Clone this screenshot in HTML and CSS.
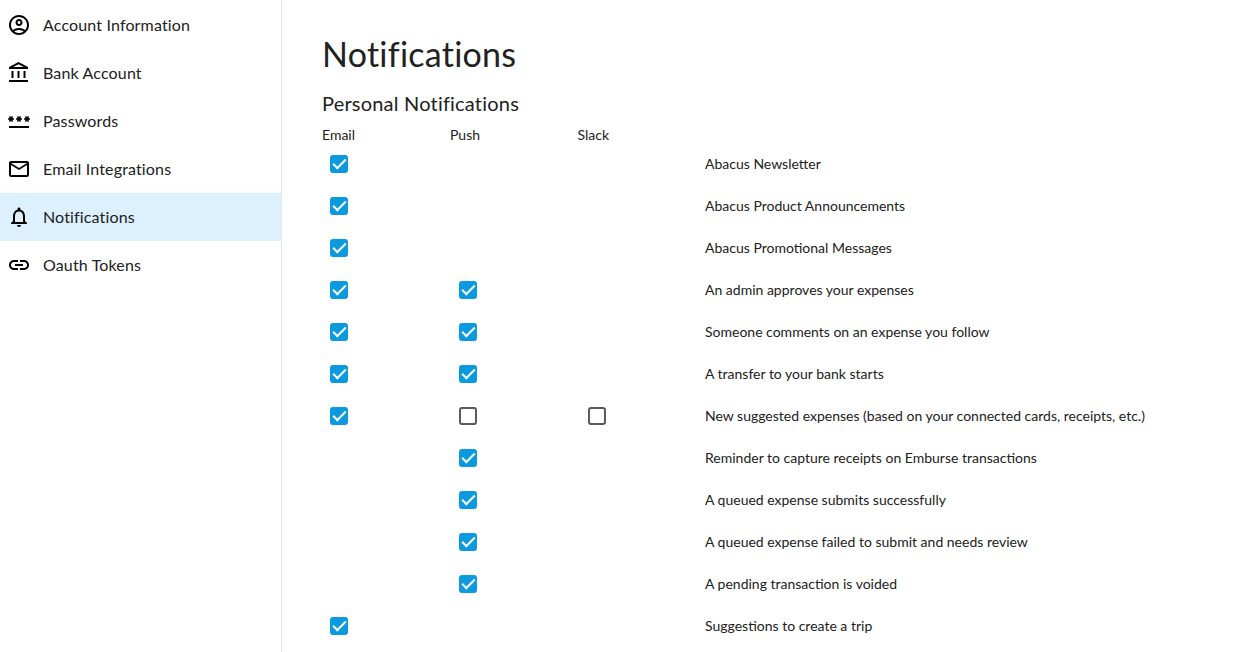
FILE: index.html
```html
<!DOCTYPE html>
<html lang="en">
<head>
    <meta charset="UTF-8">
    <meta name="viewport" content="width=device-width, initial-scale=1.0">
    <title>Notifications</title>
    <link rel="stylesheet" href="styles.css">
</head>
<body>

    <nav class="sidebar">
        <a class="nav-item">
            <svg class="nav-icon" viewBox="0 0 24 24"><path d="M12 2C6.480 2 2 6.480 2 12s4.480 10 10 10 10-4.480 10-10S17.520 2 12 2zM7.350 18.500C8.660 17.560 10.260 17 12 17s3.340.56 4.650 1.500C15.340 19.440 13.740 20 12 20s-3.340-.56-4.650-1.500zm10.790-1.380C16.450 15.800 14.320 15 12 15s-4.450.8-6.140 2.120C4.700 15.730 4 13.950 4 12c0-4.420 3.580-8 8-8s8 3.580 8 8c0 1.950-.7 3.730-1.860 5.120zM12 6c-1.930 0-3.500 1.570-3.500 3.500S10.070 13 12 13s3.500-1.570 3.500-3.500S13.930 6 12 6zm0 5c-.83 0-1.500-.67-1.500-1.500S11.170 8 12 8s1.500.67 1.500 1.500S12.830 11 12 11z"/></svg>
            <span class="nav-label">Account Information</span>
        </a>
        <a class="nav-item">
            <svg class="nav-icon" viewBox="0 0 24 24"><path d="M6.500 10h-2v7h2v-7zm6 0h-2v7h2v-7zm8.500 9H2v2h19v-2zm-2.500-9h-2v7h2v-7zm-7-6.740L16.710 6H6.290l5.210-2.740m0-2.260L2 6v2h19V6l-9.500-5z"/></svg>
            <span class="nav-label">Bank Account</span>
        </a>
        <a class="nav-item">
            <svg class="nav-icon" viewBox="0 0 24 24"><path d="M2 17h20v2H2v-2zm1.150-4.050L4 11.470l.85 1.480 1.300-.75-.85-1.480H7v-1.500H5.300l.85-1.470L4.850 7 4 8.470 3.150 7l-1.300.75.85 1.470H1v1.500h1.700l-.85 1.480 1.300.75zm6.700-.75l1.300.75.85-1.480.85 1.480 1.300-.75-.85-1.480H15v-1.500h-1.700l.85-1.470-1.300-.75L12 8.470 11.150 7l-1.300.75.85 1.470H9v1.500h1.700l-.85 1.480zM23 9.220h-1.700l.85-1.470-1.300-.75L20 8.470 19.150 7l-1.300.75.85 1.470H17v1.500h1.700l-.85 1.480 1.300.75.85-1.480.85 1.480 1.300-.75-.85-1.480H23v-1.500z"/></svg>
            <span class="nav-label">Passwords</span>
        </a>
        <a class="nav-item">
            <svg class="nav-icon" viewBox="0 0 24 24"><path d="M22 6c0-1.100-.9-2-2-2H4c-1.100 0-2 .9-2 2v12c0 1.100.9 2 2 2h16c1.100 0 2-.9 2-2V6zm-2 0l-8 5-8-5h16zm0 12H4V8l8 5 8-5v10z"/></svg>
            <span class="nav-label">Email Integrations</span>
        </a>
        <a class="nav-item active">
            <svg class="nav-icon" viewBox="0 0 24 24"><path d="M12 22c1.100 0 2-.9 2-2h-4c0 1.100.9 2 2 2zm6-6v-5c0-3.070-1.630-5.640-4.500-6.320V4c0-.83-.67-1.500-1.500-1.500s-1.500.67-1.500 1.500v.68C7.640 5.360 6 7.920 6 11v5l-2 2v1h16v-1l-2-2zm-2 1H8v-6c0-2.480 1.510-4.500 4-4.500s4 2.020 4 4.500v6z"/></svg>
            <span class="nav-label">Notifications</span>
        </a>
        <a class="nav-item">
            <svg class="nav-icon" viewBox="0 0 24 24"><path d="M3.900 12c0-1.710 1.390-3.100 3.100-3.100h4V7H7c-2.760 0-5 2.240-5 5s2.240 5 5 5h4v-1.900H7c-1.710 0-3.100-1.390-3.100-3.100zM8 13h8v-2H8v2zm9-6h-4v1.900h4c1.710 0 3.100 1.390 3.100 3.100s-1.390 3.100-3.100 3.100h-4V17h4c2.760 0 5-2.240 5-5s-2.240-5-5-5z"/></svg>
            <span class="nav-label">Oauth Tokens</span>
        </a>
    </nav>

    <main class="content">
        <h1>Notifications</h1>
        <h2>Personal Notifications</h2>

        <div class="grid head">
            <span>Email</span>
            <span>Push</span>
            <span>Slack</span>
            <span></span>
        </div>

        <div class="grid row">
            <span class="cell"><span class="box on"></span></span>
            <span class="cell"></span>
            <span class="cell"></span>
            <span class="desc">Abacus Newsletter</span>
        </div>
        <div class="grid row">
            <span class="cell"><span class="box on"></span></span>
            <span class="cell"></span>
            <span class="cell"></span>
            <span class="desc">Abacus Product Announcements</span>
        </div>
        <div class="grid row">
            <span class="cell"><span class="box on"></span></span>
            <span class="cell"></span>
            <span class="cell"></span>
            <span class="desc">Abacus Promotional Messages</span>
        </div>
        <div class="grid row">
            <span class="cell"><span class="box on"></span></span>
            <span class="cell"><span class="box on"></span></span>
            <span class="cell"></span>
            <span class="desc">An admin approves your expenses</span>
        </div>
        <div class="grid row">
            <span class="cell"><span class="box on"></span></span>
            <span class="cell"><span class="box on"></span></span>
            <span class="cell"></span>
            <span class="desc">Someone comments on an expense you follow</span>
        </div>
        <div class="grid row">
            <span class="cell"><span class="box on"></span></span>
            <span class="cell"><span class="box on"></span></span>
            <span class="cell"></span>
            <span class="desc">A transfer to your bank starts</span>
        </div>
        <div class="grid row">
            <span class="cell"><span class="box on"></span></span>
            <span class="cell"><span class="box"></span></span>
            <span class="cell"><span class="box"></span></span>
            <span class="desc">New suggested expenses (based on your connected cards, receipts, etc.)</span>
        </div>
        <div class="grid row">
            <span class="cell"></span>
            <span class="cell"><span class="box on"></span></span>
            <span class="cell"></span>
            <span class="desc">Reminder to capture receipts on Emburse transactions</span>
        </div>
        <div class="grid row">
            <span class="cell"></span>
            <span class="cell"><span class="box on"></span></span>
            <span class="cell"></span>
            <span class="desc">A queued expense submits successfully</span>
        </div>
        <div class="grid row">
            <span class="cell"></span>
            <span class="cell"><span class="box on"></span></span>
            <span class="cell"></span>
            <span class="desc">A queued expense failed to submit and needs review</span>
        </div>
        <div class="grid row">
            <span class="cell"></span>
            <span class="cell"><span class="box on"></span></span>
            <span class="cell"></span>
            <span class="desc">A pending transaction is voided</span>
        </div>
        <div class="grid row">
            <span class="cell"><span class="box on"></span></span>
            <span class="cell"></span>
            <span class="cell"></span>
            <span class="desc">Suggestions to create a trip</span>
        </div>
    </main>

</body>
</html>
```

FILE: styles.css
```css
html, body {
    height: 100%;
}

body {
    font-family: Lato, "Open Sans", sans-serif;
    color: #212121;
    background: #fff;
    margin: 0;
    display: flex;
    overflow: hidden;
}

.sidebar {
    width: 281px;
    flex-shrink: 0;
    padding-top: 1px;
    border-right: 1px solid #e6e6e6;
}

.nav-item {
    display: flex;
    align-items: center;
    gap: 12px;
    height: 48px;
    padding-left: 7px;
    font-size: 16px;
    letter-spacing: .15px;
}

.nav-label {
    margin-bottom: 2px;
}

.nav-item.active {
    background: #dcf0fd;
}

.nav-icon {
    width: 24px;
    height: 24px;
    flex-shrink: 0;
    fill: #000;
}

.content {
    flex: 1;
    padding: 31px 0 0 40px;
}

h1 {
    font-size: 34px;
    font-weight: 400;
    letter-spacing: .25px;
    line-height: 46px;
    margin: 0 0 14px;
}

h2 {
    font-size: 20px;
    font-weight: 400;
    letter-spacing: .2px;
    line-height: 24px;
    margin: 0 0 10px;
}

.grid {
    display: grid;
    grid-template-columns: 128px 127.5px 127.5px 1fr;
    font-size: 14px;
}

.head {
    height: 18px;
    line-height: 20px;
}

.row {
    height: 42px;
    align-items: center;
}

.desc {
    margin-bottom: 2px;
}

.cell {
    display: flex;
    padding-left: 8px;
}

.cell:nth-child(2) {
    padding-left: 9px;
}

.cell:nth-child(3) {
    padding-left: 10.500px;
}

.box {
    width: 18px;
    height: 18px;
    box-sizing: border-box;
    border: 2px solid #5a5a5a;
    border-radius: 3px;
    position: relative;
}

.box.on {
    background: #0b9ae0;
    border-color: #0b9ae0;
}

.box.on::after {
    content: "";
    position: absolute;
    left: .6px;
    top: 1.800px;
    width: 12.700px;
    height: 7px;
    box-sizing: border-box;
    border-left: 2px solid #fff;
    border-bottom: 2px solid #fff;
    transform: rotate(-45deg);
}
```
